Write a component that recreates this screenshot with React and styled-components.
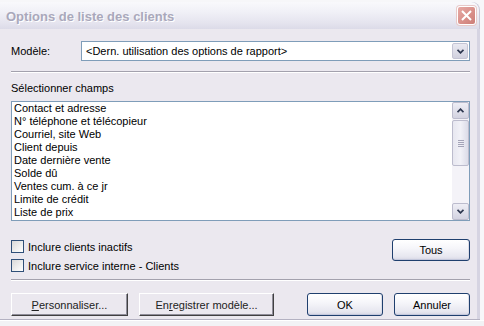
import React from "react";
import styled, { createGlobalStyle } from "styled-components";

const GlobalStyle = createGlobalStyle`
  html, body { margin: 0; padding: 0; background: #f5f5f7; }
  body {
    font-family: "Liberation Sans", Arial, sans-serif;
    font-size: 11px;
    color: #000;
  }
`;

const fields = [
  "Contact et adresse",
  "N° téléphone et télécopieur",
  "Courriel, site Web",
  "Client depuis",
  "Date dernière vente",
  "Solde dû",
  "Ventes cum. à ce jr",
  "Limite de crédit",
  "Liste de prix",
];

const Chevron = ({ up }) => (
  <svg width="7" height="5" viewBox="0 0 7 5">
    <path
      d={up ? "M0.5 4.2 L3.5 1.2 L6.5 4.2" : "M0.5 0.8 L3.5 3.8 L6.5 0.8"}
      fill="none"
      stroke="#2e3850"
      strokeWidth="1.8"
    />
  </svg>
);

const App = () => {
  return (
    <>
      <GlobalStyle />
      <Screen>
        <Window>
          <TitleBar>
            <Title>Options de liste des clients</Title>
            <CloseButton>
              <svg width="11" height="11" viewBox="0 0 11 11">
                <path d="M1 1 L10 10 M10 1 L1 10" stroke="#fff" strokeWidth="2" />
              </svg>
            </CloseButton>
          </TitleBar>
          <Body>
            <ModelRow>
              <Label>Modèle:</Label>
              <Combo>
                <ComboText>&lt;Dern. utilisation des options de rapport&gt;</ComboText>
                <DropButton>
                  <Chevron />
                </DropButton>
              </Combo>
            </ModelRow>
            <Separator $top={10} />
            <SectionLabel>Sélectionner champs</SectionLabel>
            <ListBox>
              <Items>
                {fields.map((f) => (
                  <Item key={f}>{f}</Item>
                ))}
              </Items>
              <ScrollBar>
                <ScrollButton>
                  <Chevron up />
                </ScrollButton>
                <Track>
                  <Thumb>
                    <Grip />
                    <Grip />
                    <Grip />
                    <Grip />
                  </Thumb>
                </Track>
                <ScrollButton>
                  <Chevron />
                </ScrollButton>
              </ScrollBar>
            </ListBox>
            <OptionsRow>
              <Checks>
                <CheckRow>
                  <CheckBox />
                  <span>Inclure clients inactifs</span>
                </CheckRow>
                <CheckRow>
                  <CheckBox />
                  <span>Inclure service interne - Clients</span>
                </CheckRow>
              </Checks>
              <XpButton $width={78} $height={22}>Tous</XpButton>
            </OptionsRow>
            <Separator $top={7} />
            <ButtonRow>
              <ClassicButton $width={120}>
                <u>P</u>ersonnaliser...
              </ClassicButton>
              <ClassicButton $width={139}>
                En<u>r</u>egistrer modèle...
              </ClassicButton>
              <Spacer />
              <XpButton $width={78} $height={23}>OK</XpButton>
              <XpButton $width={78} $height={23}>Annuler</XpButton>
            </ButtonRow>
          </Body>
        </Window>
        <Below />
      </Screen>
    </>
  );
};

export default App;

const Screen = styled.div`
  width: 484px;
  height: 326px;
  overflow: hidden;
  padding-top: 2px;
  box-sizing: border-box;
  background: #f7f7f9;
`;

const Window = styled.div`
  width: 480px;
  height: 317px;
  display: flex;
  flex-direction: column;
  border-bottom: 1px solid #b4b2c2;
`;

const TitleBar = styled.div`
  height: 27px;
  flex: none;
  display: flex;
  align-items: center;
  justify-content: space-between;
  padding: 0 4px 0 6px;
  border-top-right-radius: 8px;
  background: linear-gradient(#f9f9fc 0%, #f1f1f7 35%, #e4e3ee 80%, #dcdbe8 100%);
  box-shadow: inset -1px 0 0 #c9c7d6;
`;

const Title = styled.div`
  font-family: "Liberation Sans", Arial, sans-serif;
  font-weight: bold;
  font-size: 13px;
  color: #a9a8bb;
  text-shadow: 1px 1px 0 #ffffff;
  padding-top: 2px;
`;

const CloseButton = styled.div`
  width: 19px;
  height: 19px;
  box-sizing: border-box;
  border: 1px solid #ffffff;
  border-radius: 3px;
  background: linear-gradient(135deg, #e6aaa5 0%, #d88e88 60%, #cc7e78 100%);
  display: flex;
  align-items: center;
  justify-content: center;
  box-shadow: 0 0 0 1px #e7c9c8;
`;

const Body = styled.div`
  flex: 1;
  background: #ebe8ef;
  padding: 12px 7px 0 11px;
  border-right: 3px solid #d6d4e2;
  display: flex;
  flex-direction: column;
`;

const ModelRow = styled.div`
  display: flex;
  align-items: center;
  height: 20px;
`;

const Label = styled.div`
  width: 70px;
  flex: none;
`;

const Combo = styled.div`
  flex: 1;
  height: 20px;
  box-sizing: border-box;
  border: 1px solid #7f9db9;
  background: #fff;
  display: flex;
  align-items: center;
  padding: 1px;
`;

const ComboText = styled.div`
  flex: 1;
  padding-left: 3px;
`;

const DropButton = styled.div`
  width: 16px;
  height: 16px;
  box-sizing: border-box;
  border: 1px solid #c4c4d4;
  border-radius: 2px;
  background: linear-gradient(#e9e9f1, #d1d1df);
  display: flex;
  align-items: center;
  justify-content: center;
`;

const Separator = styled.div`
  margin-top: ${(p) => p.$top}px;
  height: 0;
  border-top: 1px solid #a3a1ad;
  border-bottom: 1px solid #ffffff;
`;

const SectionLabel = styled.div`
  margin-top: 9px;
  height: 13px;
  line-height: 13px;
`;

const ListBox = styled.div`
  margin-top: 6px;
  height: 120px;
  box-sizing: border-box;
  border: 1px solid #7f9db9;
  background: #fff;
  display: flex;
`;

const Items = styled.div`
  flex: 1;
  padding-left: 2px;
`;

const Item = styled.div`
  height: 13px;
  line-height: 13px;
  white-space: nowrap;
`;

const ScrollBar = styled.div`
  width: 17px;
  display: flex;
  flex-direction: column;
  background: #f4f3f8;
`;

const ScrollButton = styled.div`
  height: 17px;
  flex: none;
  box-sizing: border-box;
  border: 1px solid #bcbccd;
  border-radius: 2px;
  background: linear-gradient(#eeeef5, #d3d3e1);
  display: flex;
  align-items: center;
  justify-content: center;
`;

const Track = styled.div`
  flex: 1;
  padding-top: 1px;
`;

const Thumb = styled.div`
  height: 46px;
  box-sizing: border-box;
  border: 1px solid #bcbccd;
  border-radius: 2px;
  background: linear-gradient(90deg, #e7e7f0, #f1f1f7 50%, #dcdce8);
  display: flex;
  flex-direction: column;
  align-items: center;
  justify-content: center;
  gap: 1px;
`;

const Grip = styled.div`
  width: 6px;
  height: 1px;
  background: #a4a4b8;
`;

const OptionsRow = styled.div`
  margin-top: 18px;
  display: flex;
  justify-content: space-between;
  align-items: flex-start;
`;

const Checks = styled.div`
  padding-top: 1px;
  display: flex;
  flex-direction: column;
  gap: 6px;
`;

const CheckRow = styled.div`
  display: flex;
  align-items: center;
  gap: 4px;
  height: 13px;
`;

const CheckBox = styled.div`
  width: 13px;
  height: 13px;
  box-sizing: border-box;
  border: 1px solid #2f4f78;
  background: linear-gradient(135deg, #d8d8d8 0%, #eeeeee 55%, #ffffff 100%);
`;

const ButtonRow = styled.div`
  margin-top: 12px;
  display: flex;
  align-items: center;
  gap: 11px;
`;

const Spacer = styled.div`
  width: 11px;
`;

const ClassicButton = styled.div`
  width: ${(p) => p.$width}px;
  height: 23px;
  box-sizing: border-box;
  background: #ebe8ef;
  border-top: 1px solid #ffffff;
  border-left: 1px solid #ffffff;
  border-right: 1px solid #404040;
  border-bottom: 1px solid #404040;
  box-shadow: inset -1px -1px 0 #8f8d99;
  display: flex;
  align-items: center;
  justify-content: center;
  color: #222;
`;

const XpButton = styled.div`
  width: ${(p) => p.$width}px;
  height: ${(p) => p.$height}px;
  box-sizing: border-box;
  border: 1px solid #1f3f6e;
  border-radius: 3px;
  background: linear-gradient(#ffffff 0%, #f6f6fa 40%, #e6e6ef 85%, #d5d5e3 100%);
  box-shadow: inset 0 -1px 0 #c4c8dc, inset -1px 0 0 #dcdde8;
  display: flex;
  align-items: center;
  justify-content: center;
`;

const Below = styled.div`
  height: 6px;
  border-top: 1px solid #ffffff;
  background: #f2f2f5;
`;
